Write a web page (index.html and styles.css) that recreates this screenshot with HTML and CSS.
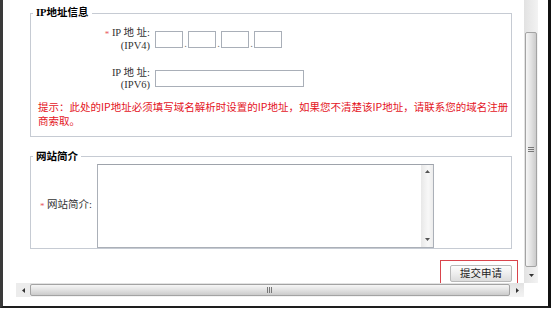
FILE: index.html
```html
<!DOCTYPE html>
<html lang="zh-CN">
<head>
    <meta charset="UTF-8">
    <title>网站备案信息</title>
    <link rel="stylesheet" href="styles.css">
</head>
<body>
<div class="window">
    <div class="viewport">
        <div class="page">
            <fieldset class="group">
                <legend>IP地址信息</legend>
                <div class="row row-first">
                    <label class="label label-wide"><span class="req">*</span> IP 地 址:<br>(IPV4)</label>
                    <div class="ip4">
                        <input class="ip-part" type="text"><span class="dot">.</span>
                        <input class="ip-part" type="text"><span class="dot">.</span>
                        <input class="ip-part" type="text"><span class="dot">.</span>
                        <input class="ip-part" type="text">
                    </div>
                </div>
                <div class="row row-next">
                    <label class="label label-wide">IP 地 址:<br>(IPV6)</label>
                    <input class="ip6" type="text">
                </div>
                <p class="hint">提示：此处的IP地址必须填写域名解析时设置的IP地址，如果您不清楚该IP地址，请联系您的域名注册<br>商索取。</p>
            </fieldset>

            <fieldset class="group group-intro">
                <legend>网站简介</legend>
                <div class="row">
                    <label class="label label-narrow"><span class="req">*</span> 网站简介:</label>
                    <div class="textbox">
                        <textarea></textarea>
                        <div class="tscroll">
                            <svg width="5" height="3" viewBox="0 0 5 3"><path d="M0 3L2.5 0 5 3z" fill="#555"/></svg>
                            <svg width="5" height="3" viewBox="0 0 5 3"><path d="M0 0L2.5 3 5 0z" fill="#555"/></svg>
                        </div>
                    </div>
                </div>
            </fieldset>

            <div class="actions">
                <span class="highlight"><button type="submit">提交申请</button></span>
            </div>
        </div>

        <div class="vscroll">
            <div class="vthumb">
                <svg width="6" height="6" viewBox="0 0 6 6"><path d="M0 .5h6M0 2.5h6M0 4.5h6" stroke="#777" stroke-width="1"/></svg>
            </div>
            <div class="varrow">
                <svg width="5" height="3" viewBox="0 0 5 3"><path d="M0 0L2.5 3 5 0z" fill="#333"/></svg>
            </div>
        </div>

        <div class="hscroll">
            <div class="harrow harrow-left">
                <svg width="3" height="5" viewBox="0 0 3 5"><path d="M3 0L0 2.5 3 5z" fill="#333"/></svg>
            </div>
            <div class="hthumb">
                <svg width="6" height="6" viewBox="0 0 6 6"><path d="M.5 0v6M2.5 0v6M4.5 0v6" stroke="#777" stroke-width="1"/></svg>
            </div>
            <div class="harrow">
                <svg width="3" height="5" viewBox="0 0 3 5"><path d="M0 0L3 2.5 0 5z" fill="#333"/></svg>
            </div>
        </div>
        <div class="corner"></div>
    </div>
</div>
</body>
</html>
```

FILE: styles.css
```css
body {
    margin: 0;
    background: #fff;
    font: 10.5px "Liberation Serif", "Noto Sans CJK SC", serif;
    color: #333;
}

.window {
    box-sizing: border-box;
    width: 551px;
    height: 308px;
    padding: 0 10px 9px 13px;
    border-left: 3px solid #3a3a3a;
    border-right: 3px solid #111;
    border-bottom: 2px solid #1e1e1e;
    background: #fff;
}

.viewport {
    display: grid;
    grid-template-columns: 1fr 14px;
    grid-template-rows: 1fr 14px;
    height: 100%;
}

.page {
    overflow: hidden;
    padding-top: 6px;
}

/* fieldsets */
.group {
    margin: 0 12px 0 14px;
    padding: 0 0 8px;
    border: 1px solid #c6cbd3;
    min-width: 0;
}

.group legend {
    margin-left: 2px;
    padding: 0 3px;
    font-weight: bold;
    line-height: 14px;
    color: #000;
}

.group-intro {
    margin-top: 13px;
    padding-bottom: 0;
}

.row {
    display: flex;
    align-items: center;
    gap: 5px;
}

.row-first {
    margin-top: 7px;
}

.row-next {
    margin-top: 15px;
}

.label {
    flex: none;
    text-align: right;
    line-height: 12px;
    color: #333;
}

.label-wide {
    width: 119px;
}

.label-narrow {
    width: 61px;
}

.req {
    color: #e8585e;
    font-size: 9px;
    vertical-align: middle;
}

.ip4 {
    display: flex;
    align-items: flex-end;
}

.ip-part, .ip6 {
    box-sizing: border-box;
    height: 17px;
    padding: 0 2px;
    border: 1px solid #a9afb8;
    background: #fff;
}

.ip-part {
    width: 28px;
}

.ip6 {
    width: 149px;
}

.dot {
    width: 5px;
    text-align: center;
    line-height: 9px;
    color: #777;
}

.hint {
    margin: 9px 0 0 7px;
    line-height: 14px;
    color: #e4141e;
    font-family: "Noto Sans CJK SC", sans-serif;
    white-space: nowrap;
}

.textbox {
    display: flex;
    box-sizing: border-box;
    width: 337px;
    height: 84px;
    border: 1px solid #abb0b8;
    border-top-color: #9ea3ab;
}

.textbox textarea {
    flex: 1;
    border: 0;
    padding: 2px;
    resize: none;
    outline: none;
    font: inherit;
}

.tscroll {
    width: 12px;
    padding: 5px 0 6px;
    display: flex;
    flex-direction: column;
    justify-content: space-between;
    align-items: center;
    background: linear-gradient(to right, #e8e8e8, #f8f8f8 60%, #ececec);
}

/* submit */
.actions {
    display: flex;
    justify-content: flex-end;
    margin: 11px 6px 0 0;
}

.highlight {
    display: flex;
    padding: 4px 5px 1px 9px;
    border: 1px solid #d9444c;
}

.highlight button {
    width: 62px;
    height: 17px;
    padding: 0;
    border: 1px solid #b9b9b9;
    border-radius: 2px;
    background: linear-gradient(#fdfdfd, #ececec 55%, #dcdcdc);
    font: 10.5px "Noto Sans CJK SC", sans-serif;
    line-height: 14px;
    color: #222;
    cursor: pointer;
}

/* scrollbars */
.vscroll {
    display: flex;
    flex-direction: column;
    padding-top: 32px;
    background: linear-gradient(to right, #e2e2e2, #f3f3f3);
}

.vthumb {
    flex: 1;
    margin: 0 1px;
    display: flex;
    align-items: center;
    justify-content: center;
    border: 1px solid #a3a3a3;
    border-radius: 2px;
    background: linear-gradient(to right, #f6f6f6, #e2e2e2 50%, #cbcbcb);
}

.varrow {
    height: 16px;
    display: flex;
    align-items: center;
    justify-content: center;
}

.hscroll {
    display: flex;
    background: linear-gradient(#e2e2e2, #f3f3f3);
}

.harrow {
    width: 14px;
    display: flex;
    align-items: center;
    justify-content: center;
}

.harrow-left {
    background: #ececec;
}

.hthumb {
    flex: 1;
    margin: 1px 0;
    display: flex;
    align-items: center;
    justify-content: center;
    border: 1px solid #a3a3a3;
    border-radius: 2px;
    background: linear-gradient(#f6f6f6, #e2e2e2 50%, #cbcbcb);
}

.corner {
    background: #fff;
}
```
